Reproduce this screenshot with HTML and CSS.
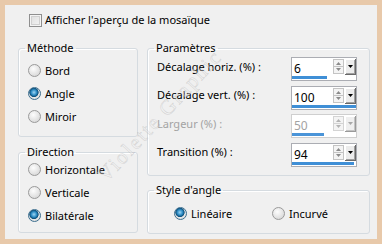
FILE: index.html
```html
<!DOCTYPE html>
<html>
<head lang="fr">
    <meta charset="UTF-8">
    <title>Mosaïque</title>
    <link rel="stylesheet" href="styles.css">
</head>
<body>
<div class="panel">
    <div class="check"><span class="box"></span>Afficher l'aperçu de la mosaïque</div>
    <div class="cols">
        <div class="col left">
            <fieldset class="group method">
                <legend>Méthode</legend>
                <div class="radio"><span class="dot"></span>Bord</div>
                <div class="radio"><span class="dot on"></span>Angle</div>
                <div class="radio"><span class="dot"></span>Miroir</div>
            </fieldset>
            <fieldset class="group direction">
                <legend>Direction</legend>
                <div class="radio"><span class="dot"></span>Horizontale</div>
                <div class="radio"><span class="dot"></span>Verticale</div>
                <div class="radio"><span class="dot on"></span>Bilatérale</div>
            </fieldset>
        </div>
        <div class="col right">
            <fieldset class="group params">
                <legend>Paramètres</legend>
                <div class="row">
                    <span class="lbl">Décalage horiz. (%) :</span>
                    <div class="spin"><span class="val">6</span>
                        <svg class="arrows" width="11" height="15" viewBox="0 0 11 15"><rect x="0.5" y="0.5" width="10" height="14" fill="#f4f4f4" stroke="#c4c4c4"/><line x1="1" y1="7.5" x2="10" y2="7.5" stroke="#c4c4c4"/><path d="M3 6h5L5.5 3z" fill="#8a8a8a"/><path d="M3 9h5l-2.5 3z" fill="#8a8a8a"/></svg>
                        <svg class="drop" width="11" height="16" viewBox="0 0 11 16"><rect x="0" y="0" width="11" height="16" fill="#696969"/><rect x="0" y="0" width="10" height="15" fill="#fff"/><rect x="1" y="1" width="9" height="14" fill="#a0a0a0"/><rect x="1" y="1" width="8" height="13" fill="#ececec"/><path d="M3 6h5l-2.5 3z" fill="#000"/></svg>
                        <span class="bar" style="width:35px"></span></div>
                </div>
                <div class="row">
                    <span class="lbl">Décalage vert. (%) :</span>
                    <div class="spin"><span class="val">100</span>
                        <svg class="arrows" width="11" height="15" viewBox="0 0 11 15"><rect x="0.5" y="0.5" width="10" height="14" fill="#f4f4f4" stroke="#c4c4c4"/><line x1="1" y1="7.5" x2="10" y2="7.5" stroke="#c4c4c4"/><path d="M3 6h5L5.5 3z" fill="#8a8a8a"/><path d="M3 9h5l-2.5 3z" fill="#8a8a8a"/></svg>
                        <svg class="drop" width="11" height="16" viewBox="0 0 11 16"><rect x="0" y="0" width="11" height="16" fill="#696969"/><rect x="0" y="0" width="10" height="15" fill="#fff"/><rect x="1" y="1" width="9" height="14" fill="#a0a0a0"/><rect x="1" y="1" width="8" height="13" fill="#ececec"/><path d="M3 6h5l-2.5 3z" fill="#000"/></svg>
                        <span class="bar" style="width:64px"></span></div>
                </div>
                <div class="row off">
                    <span class="lbl">Largeur (%) :</span>
                    <div class="spin"><span class="val">50</span>
                        <svg class="arrows" width="11" height="15" viewBox="0 0 11 15"><rect x="0.5" y="0.5" width="10" height="14" fill="#f4f4f4" stroke="#d4d4d4"/><line x1="1" y1="7.5" x2="10" y2="7.5" stroke="#d4d4d4"/><path d="M3 6h5L5.5 3z" fill="#b4b4b4"/><path d="M3 9h5l-2.5 3z" fill="#b4b4b4"/></svg>
                        <svg class="drop" width="11" height="16" viewBox="0 0 11 16"><rect x="0" y="0" width="11" height="16" fill="#9a9a9a"/><rect x="0" y="0" width="10" height="15" fill="#fff"/><rect x="1" y="1" width="9" height="14" fill="#c4c4c4"/><rect x="1" y="1" width="8" height="13" fill="#efefef"/><path d="M3 6h5l-2.5 3z" fill="#a8a8a8"/></svg>
                        <span class="bar" style="width:32px"></span></div>
                </div>
                <div class="row">
                    <span class="lbl">Transition (%) :</span>
                    <div class="spin"><span class="val">94</span>
                        <svg class="arrows" width="11" height="15" viewBox="0 0 11 15"><rect x="0.5" y="0.5" width="10" height="14" fill="#f4f4f4" stroke="#c4c4c4"/><line x1="1" y1="7.5" x2="10" y2="7.5" stroke="#c4c4c4"/><path d="M3 6h5L5.5 3z" fill="#8a8a8a"/><path d="M3 9h5l-2.5 3z" fill="#8a8a8a"/></svg>
                        <svg class="drop" width="11" height="16" viewBox="0 0 11 16"><rect x="0" y="0" width="11" height="16" fill="#696969"/><rect x="0" y="0" width="10" height="15" fill="#fff"/><rect x="1" y="1" width="9" height="14" fill="#a0a0a0"/><rect x="1" y="1" width="8" height="13" fill="#ececec"/><path d="M3 6h5l-2.5 3z" fill="#000"/></svg>
                        <span class="bar" style="width:62px"></span></div>
                </div>
            </fieldset>
            <fieldset class="group style">
                <legend>Style d'angle</legend>
                <div class="radios">
                    <div class="radio first"><span class="dot on"></span>Linéaire</div>
                    <div class="radio"><span class="dot"></span>Incurvé</div>
                </div>
            </fieldset>
        </div>
    </div>
    <span class="mark">Violette Graphic</span>
</div>
</body>
</html>
```

FILE: styles.css
```css
*{
    margin: 0;
    padding: 0;
    box-sizing: border-box;
}
body{
    background: #e8c9aa;
    font-family: "Noto Sans", "Open Sans", sans-serif;
    font-size: 11px;
    color: #000;
}
.panel{
    position: relative;
    margin: 5px;
    width: 372px;
    height: 234px;
    background: #f0f0f0;
    overflow: hidden;
}
.check{
    display: flex;
    align-items: center;
    height: 16px;
    margin-top: 7px;
    padding-left: 24px;
    line-height: 16px;
}
.check .box{
    width: 13px;
    height: 13px;
    margin-right: 3px;
    border: 1px solid #8f8f8f;
    background: linear-gradient(135deg, #dcdcdc, #f6f6f6);
    box-shadow: inset 0 0 0 1px #f4f4f4, inset 0 0 0 2px #d0d0d0;
}
.cols{
    display: flex;
    gap: 9px;
    margin-top: 12px;
    padding-left: 13px;
}
.col{
    display: flex;
    flex-direction: column;
}
.left{
    width: 120px;
    gap: 7px;
}
.right{
    width: 223px;
    gap: 6px;
}
.group{
    border: 1px solid #d5dbe0;
    border-radius: 3px;
    box-shadow: inset 1px 1px 0 #fff;
}
.group legend{
    margin-left: -3px;
    padding: 0 2px;
    line-height: 16px;
}
.method{
    height: 97px;
    padding: 3px 0 0 9px;
}
.direction{
    height: 89px;
    padding: 0 0 0 9px;
}
.direction .radio:first-of-type{
    margin-top: -2px;
}
.radio{
    display: flex;
    align-items: center;
    height: 23px;
}
.dot{
    width: 13px;
    height: 13px;
    margin-right: 4px;
    border-radius: 50%;
    border: 1px solid #9a9a9a;
    background: radial-gradient(circle at 40% 35%, #fdfdfd 0, #e4e4e4 55%, #cfcfcf 100%);
}
.dot.on{
    border-color: #3d6f8f;
    background: radial-gradient(circle at 45% 40%, #9fd6f4 0, #2d8cc4 30%, #0d4e79 48%, #e8e8e8 56%, #d2d2d2 100%);
}
.params{
    height: 136px;
    padding: 1px 12px 0 9px;
    display: flex;
    flex-direction: column;
    gap: 4.5px;
}
.row{
    display: flex;
    align-items: center;
    justify-content: space-between;
    height: 24px;
}
.lbl{
    margin-top: -6px;
}
.spin{
    position: relative;
    display: flex;
    align-items: flex-start;
    width: 66px;
    height: 24px;
    border: 1px solid #abadb3;
    background: #fff;
}
.spin .val{
    flex: 1;
    padding: 3px 0 0 2px;
    line-height: 16px;
    font-size: 12px;
}
.spin .arrows{
    margin: 1px 1px 0 0;
}
.spin .drop{
    margin: 1px 0 0 0;
}
.spin .bar{
    position: absolute;
    left: 0;
    bottom: 1px;
    height: 3px;
    background: #3f8fd6;
}
.row.off .lbl,
.row.off .val{
    color: #a3a3a3;
}
.row.off .spin{
    border-color: #cfcfcf;
}
.row.off .bar{
    background: #4a94d8;
}
.style{
    height: 52px;
    padding: 4px 0 0 26px;
}
.style legend{
    margin-left: -20px;
}
.radios{
    display: flex;
}
.radios .first{
    width: 98px;
}
.mark{
    position: absolute;
    left: 155px;
    top: 111px;
    transform: translate(-50%, -50%) rotate(-47deg);
    font-family: "Liberation Serif", serif;
    font-size: 21px;
    letter-spacing: 2px;
    white-space: nowrap;
    color: rgba(240, 240, 240, 0.4);
    -webkit-text-stroke: 0.5px rgba(150, 150, 150, 0.35);
    pointer-events: none;
}
```
